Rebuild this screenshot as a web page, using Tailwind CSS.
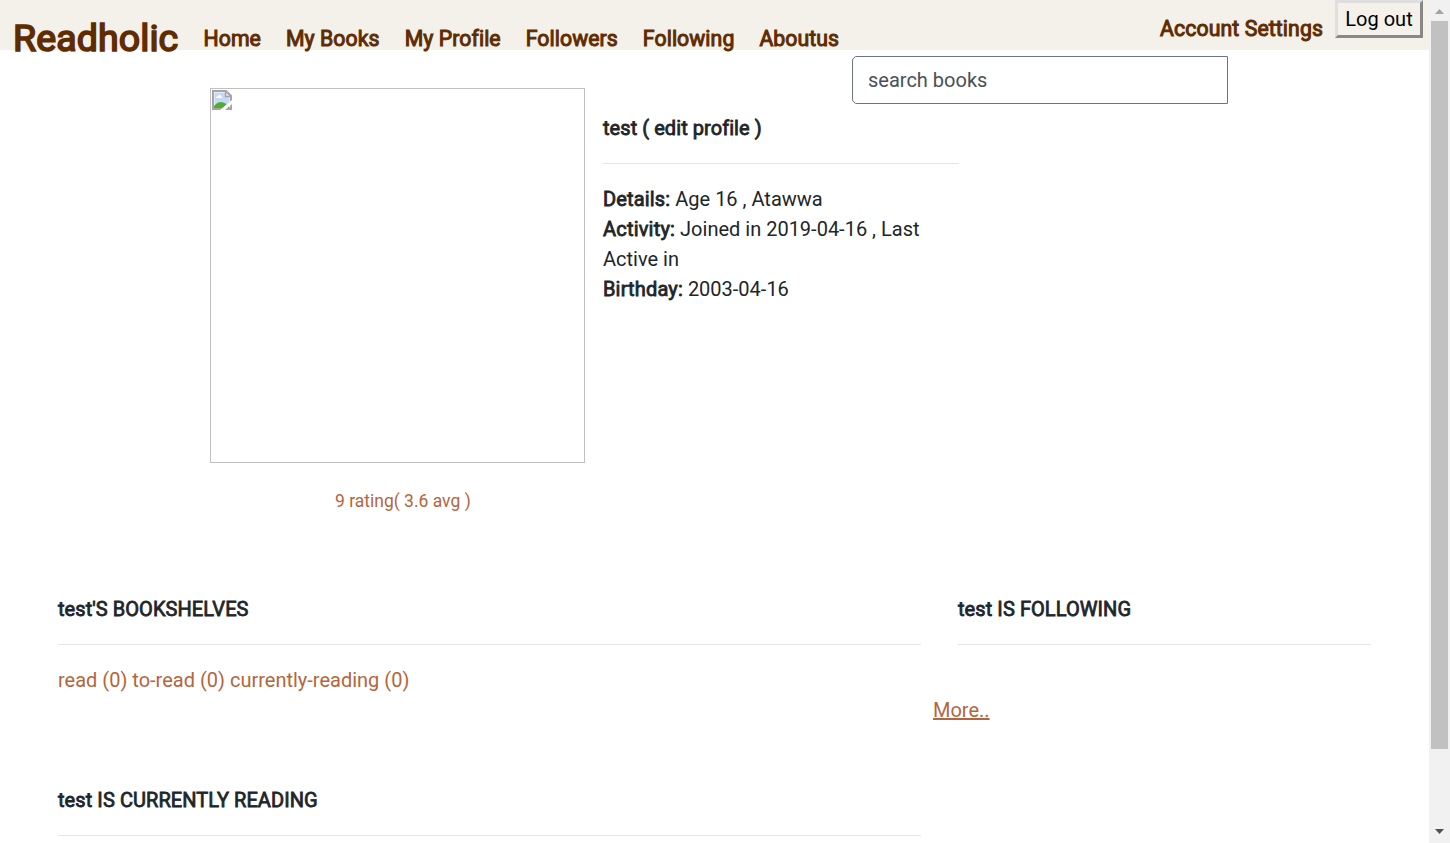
<!DOCTYPE html>
<html lang="en">
<head>
<meta charset="utf-8">
<title>Readholic</title>
<script src="https://cdn.jsdelivr.net/npm/@tailwindcss/browser@4"></script>
</head>
<body class="flex h-screen overflow-hidden bg-white font-[Roboto,sans-serif] text-[20px] leading-[30px] text-[#212529]">
<div class="h-full w-[1429px] shrink-0 overflow-hidden">
  <header class="flex h-[50px] items-start bg-[#f4f1ea] text-[#5f2c00]">
    <a class="ml-[13px] mt-[8px] w-[166px] whitespace-nowrap text-[37.5px] leading-[60px] tracking-[0.1px] [-webkit-text-stroke:1.7px_#5f2c00]">Readholic</a>
    <nav class="ml-[24.500px] mt-[24px] flex gap-[25px] whitespace-nowrap text-[21.25px] tracking-[0.07px] [-webkit-text-stroke:1px_#5f2c00]">
      <a>Home</a><a>My Books</a><a>My Profile</a><a>Followers</a><a>Following</a><a>Aboutus</a>
    </nav>
    <a class="ml-auto mt-[14px] whitespace-nowrap text-[21.25px] tracking-[0.09px] [-webkit-text-stroke:1px_#5f2c00]">Account Settings</a>
    <button class="ml-[12px] mr-[6px] flex h-[38px] w-[88px] items-center justify-center whitespace-nowrap border-[3px] border-t-[#dedede] border-l-[#dedede] border-r-[#888] border-b-[#888] text-black">Log out</button>
  </header>
  <main>
    <div class="ml-[852px] mt-[6px] flex h-[48px] w-[376px] items-center rounded-l-[5px] border border-[#6c757d] pl-[15px] text-[#495057]">search books</div>
    <section class="-mt-[16px] ml-[210px] flex">
      <div class="w-[375px]">
        <div class="h-[375px] border border-[#c0c0c0] pl-px pt-px">
          <svg width="20" height="20" viewBox="0 0 20 20">
            <path d="M1 1H14L19 6V19H1z" fill="#fff" stroke="#a5a5a5" stroke-width="2"/>
            <path d="M2.500 2.500H13V7H17.500V17.500H2.500z" fill="#c3d9f7"/>
            <path d="M4 8c0-1.500 1.600-1.800 2-1.600C6.400 4 9 4.300 9 6.200c1.500 0 1.500 1.800.5 1.800z" fill="#fff"/>
            <path d="M2 18v-2c3-3 4-4 7-4s6 2 9 6z" fill="#4fae32"/>
            <path d="M13.500 1V6.500H19z" fill="#eee" stroke="#a5a5a5" stroke-width="1.400"/>
            <path d="M8 20L20 10V14L13 20z" fill="#fff"/>
          </svg>
        </div>
        <p class="ml-[125px] mt-[23px] whitespace-nowrap text-[17.5px] text-[#b5653c]">9 rating( 3.6 avg )</p>
      </div>
      <div class="ml-[18px] mt-[25px] w-[356px]">
        <h2 class="tracking-[0.06px] [-webkit-text-stroke:0.8px_#212529]">test ( edit profile )</h2>
        <hr class="mt-[20px] mb-[20px] border-[#e5e5e5]">
        <p><b class="font-normal tracking-[0.16px] [-webkit-text-stroke:0.8px_#212529]">Details:</b> Age 16 , Atawwa</p>
        <p><b class="font-normal tracking-[0.2px] [-webkit-text-stroke:0.8px_#212529]">Activity:</b> Joined in 2019-04-16 , Last<br>Active in</p>
        <p><b class="font-normal tracking-[0.16px] [-webkit-text-stroke:0.8px_#212529]">Birthday:</b> 2003-04-16</p>
      </div>
    </section>
    <div class="ml-[58px] mt-[78px] flex">
      <div class="w-[863px]">
        <section>
          <h2 class="tracking-[0.06px] [-webkit-text-stroke:0.8px_#212529]">test'S BOOKSHELVES</h2>
          <hr class="mt-[20px] mb-[20px] border-[#e5e5e5]">
          <p class="text-[#b5653c]">read (0) to-read (0) currently-reading (0)</p>
        </section>
        <section class="mt-[90px]">
          <h2 class="tracking-[0.08px] [-webkit-text-stroke:0.8px_#212529]">test IS CURRENTLY READING</h2>
          <hr class="mt-[20px] border-[#e5e5e5]">
        </section>
      </div>
      <section class="ml-[12px] w-[438px]">
        <h2 class="ml-[25px] tracking-[0.08px] [-webkit-text-stroke:0.8px_#212529]">test IS FOLLOWING</h2>
        <hr class="ml-[25px] mt-[20px] border-[#e5e5e5]">
        <a class="mt-[50px] block text-[#b5653c] underline">More..</a>
      </section>
    </div>
  </main>
</div>
<aside class="flex h-full w-[21px] shrink-0 flex-col items-center bg-[#f1f1f1]">
  <svg class="h-[21px] w-[17px] shrink-0" viewBox="0 0 17 21"><path d="M4 14L8.500 9L13 14z" fill="#a3a3a3"/></svg>
  <div class="h-[728px] w-[17px] bg-[#c1c1c1]"></div>
  <svg class="mt-auto h-[21px] w-[17px] shrink-0" viewBox="0 0 17 21"><path d="M4 7L8.500 12L13 7z" fill="#505050"/></svg>
</aside>
</body>
</html>
